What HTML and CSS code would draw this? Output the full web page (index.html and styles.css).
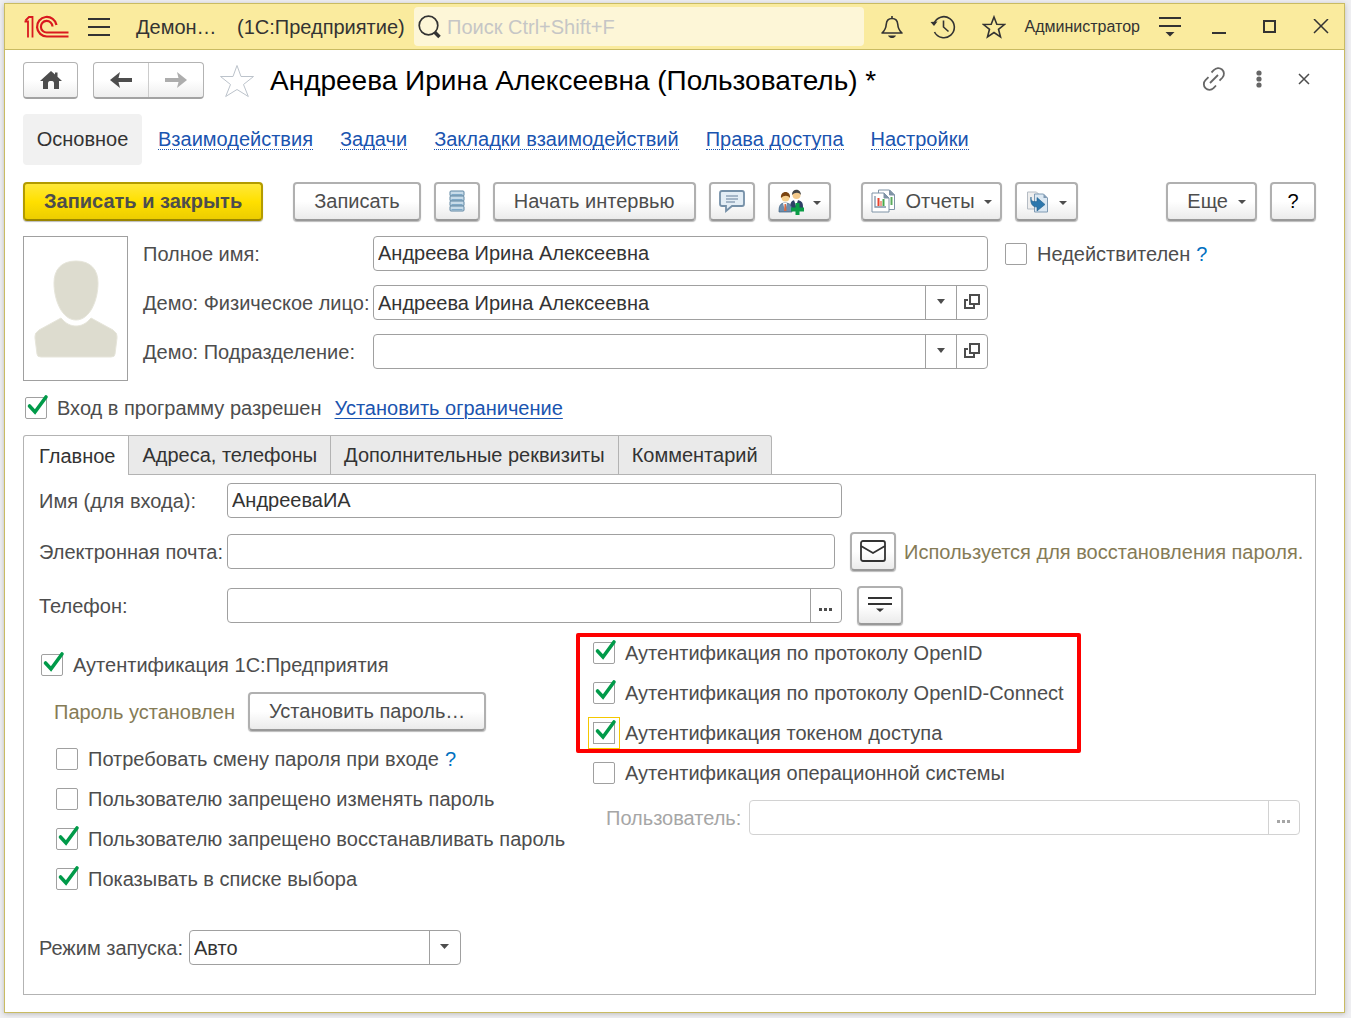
FILE: index.html
```html
<!DOCTYPE html>
<html lang="ru">
<head>
<meta charset="utf-8">
<title>Андреева Ирина Алексеевна (Пользователь)</title>
<link rel="stylesheet" href="styles.css">
</head>
<body>
<div class="window">
  <header class="titlebar">
    <svg class="logo" width="46" height="24" viewBox="0 0 46 24" fill="none" stroke="#d9191f">
      <path d="M0.500 6.500h3.500V22.500M1.500 5.500L5 2h3.500V22.500" stroke-width="1.800"/>
      <path d="M32.500 10A9.800 9.800 0 1 0 23 21.500H44.500M28.500 11.500A5.800 5.800 0 1 0 23 17.500H44.500" stroke-width="2.200"/>
    </svg>
    <button class="bar-button menu-button" aria-label="Меню"><svg width="22" height="18" viewBox="0 0 22 18" stroke="#333" stroke-width="2"><path d="M0 1h22M0 9h22M0 17h22"/></svg></button>
    <span class="app-name">Демон…</span>
    <span class="platform">(1С:Предприятие)</span>
    <label class="search">
      <svg width="24" height="24" viewBox="0 0 24 24" fill="none" stroke="#333"><circle cx="10.500" cy="10.500" r="9.300" stroke-width="1.700"/><path d="M16.500 17l5 5" stroke-width="3.500"/></svg>
      <input type="search" placeholder="Поиск Ctrl+Shift+F" aria-label="Поиск">
    </label>
    <div class="bar-tools">
      <button class="bar-button" aria-label="Уведомления"><svg width="24" height="24" viewBox="0 0 24 24" fill="none" stroke="#333" stroke-width="1.600"><path d="M2 18c3-2.500 4-5 4.300-9 .3-3.500 2.700-5.500 5.700-5.500s5.400 2 5.700 5.500c.3 4 1.300 6.500 4.300 9z" stroke-linejoin="round"/><path d="M12 1v2"/><path d="M8 20.500h8c-1 2-2.500 2.500-4 2.500s-3-.5-4-2.500z" fill="#333" stroke="none"/></svg></button>
      <button class="bar-button" aria-label="История"><svg width="26" height="24" viewBox="0 0 26 24" fill="none" stroke="#333" stroke-width="1.600"><path d="M4 8.500A10.500 10.500 0 1 1 4.500 17M13.500 5.500V12l5 4.500"/><path d="M0.500 7l7-.5L4 11z" fill="#333" stroke="none"/></svg></button>
      <button class="bar-button" aria-label="Избранное"><svg width="24" height="24" viewBox="0 0 24 24" fill="none" stroke="#333" stroke-width="1.600"><path d="M12 2l2.800 7.200 7.700.3-6 4.800 2 7.500L12 17.500l-6.500 4.300 2-7.500-6-4.800 7.700-.3z"/></svg></button>
      <span class="user-name">Администратор</span>
      <button class="bar-button" aria-label="Сервис"><svg width="22" height="20" viewBox="0 0 22 20"><path d="M0 1h22M0 9h22" stroke="#333" stroke-width="2"/><path d="M6.500 15h9L11 19.500z" fill="#333"/></svg></button>
    </div>
    <div class="window-controls">
      <button class="bar-button" aria-label="Свернуть"><svg width="16" height="16" viewBox="0 0 16 16"><path d="M1 14h14" stroke="#333" stroke-width="2"/></svg></button>
      <button class="bar-button" aria-label="Развернуть"><svg width="16" height="16" viewBox="0 0 16 16"><path d="M2 2h11v11H2z" fill="none" stroke="#333" stroke-width="2"/></svg></button>
      <button class="bar-button" aria-label="Закрыть"><svg width="16" height="16" viewBox="0 0 16 16"><path d="M1 0l14 14M15 0L1 14" stroke="#333" stroke-width="1.500"/></svg></button>
    </div>
  </header>

  <main class="page">
    <div class="heading">
      <button class="nav-button" aria-label="Домой"><svg width="22" height="18" viewBox="0 0 22 18" fill="#4d4d4d"><path d="M11 0l4 3.500V1.500h2.500v4.200L22 10h-3v8h-5v-5.500c0-2-1-2.500-3-2.500s-3 .5-3 2.500V18H3v-8H0z"/></svg></button>
      <div class="nav-pair">
        <button aria-label="Назад"><svg width="22" height="16" viewBox="0 0 22 16" fill="#4d4d4d"><path d="M0 8l10-8-1.500 6H22v4H8.500L10 16z"/></svg></button>
        <button aria-label="Вперед"><svg width="22" height="16" viewBox="0 0 22 16" fill="#adadad"><path d="M22 8L12 0l1.500 6H0v4h13.500L12 16z"/></svg></button>
      </div>
      <button class="favorite" aria-label="Добавить в избранное"><svg width="36" height="34" viewBox="0 0 36 34" fill="#fff" stroke="#bcc3cb"><path d="M18 1.500l4 11h12.500l-10 8 4.800 12L18 25.500l-11.300 7 4.800-12-10-8H14z"/></svg></button>
      <h1>Андреева Ирина Алексеевна (Пользователь) *</h1>
      <div class="heading-tools">
        <button class="plain" aria-label="Ссылка"><svg width="24" height="24" viewBox="0 0 24 24" fill="none" stroke="#666" stroke-width="1.800"><path d="M9.500 5.500l2.500-2.500a5.500 5.500 0 0 1 8.500 7.500l-3 3.200M6.500 10.200l-3 3a5.500 5.500 0 0 0 8 8l2.500-2.700M8 16l8-8"/></svg></button>
        <button class="plain" aria-label="Действия"><svg width="6" height="18" viewBox="0 0 6 18" fill="#666"><circle cx="3" cy="3" r="2.600"/><circle cx="3" cy="9" r="2.600"/><circle cx="3" cy="15" r="2.600"/></svg></button>
        <button class="plain" aria-label="Закрыть форму"><svg width="12" height="12" viewBox="0 0 12 12" stroke="#4d4d4d" stroke-width="1.500"><path d="M1 1l10 10M11 1L1 11"/></svg></button>
      </div>
    </div>

    <nav class="sections">
      <span class="current">Основное</span>
      <a href="#interactions">Взаимодействия</a>
      <a href="#tasks">Задачи</a>
      <a href="#bookmarks">Закладки взаимодействий</a>
      <a href="#rights">Права доступа</a>
      <a href="#settings">Настройки</a>
    </nav>

    <div class="commands">
      <div class="group"><button class="button primary">Записать и закрыть</button></div>
      <div class="group">
        <button class="button">Записать</button>
        <button class="button icon" aria-label="Список"><svg width="16" height="22" viewBox="0 0 16 22"><g fill="#c7dbe9" stroke="#5f86a3"><rect x="1" y="1" width="14" height="5" rx="1"/><rect x="1" y="6" width="14" height="5" rx="1"/><rect x="1" y="11" width="14" height="5" rx="1"/><rect x="1" y="16" width="14" height="5" rx="1"/></g><path d="M2.500 4.500h11M2.500 9.500h11M2.500 14.500h11M2.500 19.500h11" stroke="#7fa9c8"/></svg></button>
        <button class="button">Начать интервью</button>
        <button class="button icon" aria-label="Обсуждение"><svg width="26" height="24" viewBox="0 0 26 24"><path d="M3 2h20q2 0 2 2v11q0 2-2 2H13l-6 5v-5H3q-2 0-2-2V4q0-2 2-2z" fill="#e3edf5" stroke="#7590a8" stroke-width="1.800"/><path d="M7 7h12M7 10h12M7 13h9" stroke="#8fa3b8" stroke-width="1.300"/></svg></button>
        <button class="button icon-drop" aria-label="Участники">
          <svg width="26" height="26" viewBox="0 0 26 26"><path d="M12 20c0-6 1-9 6-9s7 2 7 7v2z" fill="#2e3f66"/><path d="M16 11l2 6 2-6z" fill="#fff"/><circle cx="18.500" cy="6" r="4" fill="#f3c98b"/><path d="M14 6c-.5-7 9-7 9 0-2-3-6-3-9 0z" fill="#444"/><path d="M1 23c0-6 1-9 6-9s7 2 7 9z" fill="#6f8fae" stroke="#3e5f80" stroke-width=".7"/><path d="M5 14l2 8 2-8z" fill="#fff"/><path d="M6.500 15h1.500l.5 7h-2.500z" fill="#d86b45"/><circle cx="7.500" cy="8.500" r="4" fill="#f6cf8d"/><path d="M3 9c-1-8 10-8 9 0-2-3-6-3-9 0z" fill="#7a4310"/><path d="M17.500 14h4v4.500H26v4h-4.500V26h-4v-3.500H13v-4h4.500z" fill="#0a9c46"/></svg>
          <svg class="caret" width="8" height="4" viewBox="0 0 8 4"><path d="M0 0h8L4 4z" fill="#4d4d4d"/></svg>
        </button>
      </div>
      <div class="group">
        <button class="button reports">
          <svg width="26" height="24" viewBox="0 0 26 24" fill="#fff" stroke="#7f93a6"><path d="M7.500 1h11l5 5v14.500h-16z"/><path d="M18.500 1v5h5z" fill="#7f93a6"/><path d="M20.500 8v8" stroke="#5cab5c" stroke-width="2"/><path d="M1 4h12l5 5v14H1z"/><path d="M13 4v5h5z" fill="#7f93a6"/><path d="M4 7v11h11" fill="none" stroke-width="1.300"/><path d="M7.500 9v8" stroke="#e8432e" stroke-width="2"/><path d="M10 12v5" stroke="#f0a090" stroke-width="2"/><path d="M12.500 10v7" stroke="#49a84a" stroke-width="2"/></svg>
          Отчеты
          <svg class="caret" width="8" height="4" viewBox="0 0 8 4"><path d="M0 0h8L4 4z" fill="#4d4d4d"/></svg>
        </button>
        <button class="button icon-drop" aria-label="Создать на основании">
          <svg width="24" height="24" viewBox="0 0 24 24"><path d="M1.500 2h9l3 3v14h-12z" fill="#eee" stroke="#b5bcc4"/><path d="M8.500 4h9l4 4v14h-13z" fill="#dbe8f3" stroke="#7f9ab3"/><path d="M17.500 4v4h4z" fill="#7f9ab3"/><path d="M5 7c0 4 1 5 6 4.500V7.500l8 7-8 6.500v-4C6 17 4 13 5 7z" fill="#2c77ad" stroke="#245f8c" stroke-width=".6"/></svg>
          <svg class="caret" width="8" height="4" viewBox="0 0 8 4"><path d="M0 0h8L4 4z" fill="#4d4d4d"/></svg>
        </button>
      </div>
      <div class="group end">
        <button class="button more">Еще <svg class="caret" width="8" height="4" viewBox="0 0 8 4"><path d="M0 0h8L4 4z" fill="#4d4d4d"/></svg></button>
        <button class="button icon help-button">?</button>
      </div>
    </div>

    <section class="person">
      <div class="photo">
        <svg width="84" height="98" viewBox="0 0 84 98" fill="#dddccf" stroke="#e6e5da"><path d="M42 1c15 0 22 9 22 22 0 17-8 37-22 37S20 40 20 23C20 10 27 1 42 1z"/><path d="M27 58c5 6 10 8 15 8s10-2 15-8l22 12q5 3 4 8l-2 16q0 3-4 3H7q-4 0-4-3L1 78q-1-5 4-8z"/></svg>
      </div>
      <div class="person-fields">
        <label for="full-name">Полное имя:</label>
        <input class="field" id="full-name" type="text" value="Андреева Ирина Алексеевна">
        <div class="check-row invalid">
          <label class="check"><input type="checkbox"><span>Недействителен</span></label>
          <a class="hint" href="#help-invalid">?</a>
        </div>

        <label for="individual">Демо: Физическое лицо:</label>
        <div class="combo">
          <input id="individual" type="text" value="Андреева Ирина Алексеевна">
          <button aria-label="Выбрать физическое лицо"><svg width="8" height="5" viewBox="0 0 8 5"><path d="M0 0h8L4 5z" fill="#4d4d4d"/></svg></button>
          <button aria-label="Открыть физическое лицо"><svg width="16" height="16" viewBox="0 0 16 16" fill="none" stroke="#4d4d4d" stroke-width="2"><path d="M6 1h9v9H6zM4 6H1v8h9v-3"/></svg></button>
        </div>

        <label class="row-start" for="department">Демо: Подразделение:</label>
        <div class="combo">
          <input id="department" type="text">
          <button aria-label="Выбрать подразделение"><svg width="8" height="5" viewBox="0 0 8 5"><path d="M0 0h8L4 5z" fill="#4d4d4d"/></svg></button>
          <button aria-label="Открыть подразделение"><svg width="16" height="16" viewBox="0 0 16 16" fill="none" stroke="#4d4d4d" stroke-width="2"><path d="M6 1h9v9H6zM4 6H1v8h9v-3"/></svg></button>
        </div>
      </div>
    </section>

    <div class="check-row access">
      <label class="check"><input type="checkbox" checked><span>Вход в программу разрешен</span></label>
      <a class="restrict" href="#restrict">Установить ограничение</a>
    </div>

    <div class="tabs" role="tablist">
      <button class="tab selected" role="tab" aria-selected="true">Главное</button>
      <button class="tab" role="tab" aria-selected="false">Адреса, телефоны</button>
      <button class="tab" role="tab" aria-selected="false">Дополнительные реквизиты</button>
      <button class="tab" role="tab" aria-selected="false">Комментарий</button>
    </div>

    <section class="panel">
      <div class="line login">
        <label for="login">Имя (для входа):</label>
        <input class="field" id="login" type="text" value="АндрееваИА">
      </div>
      <div class="line">
        <label for="email">Электронная почта:</label>
        <input class="field email" id="email" type="email">
        <button class="button icon" aria-label="Написать письмо"><svg width="26" height="22" viewBox="0 0 26 22" fill="none" stroke="#333" stroke-width="1.800"><rect x="1" y="1" width="24" height="20" rx="2"/><path d="M1 6l12 7 12-7"/></svg></button>
        <span class="note">Используется для восстановления пароля.</span>
      </div>
      <div class="line">
        <label for="phone">Телефон:</label>
        <div class="combo">
          <input id="phone" type="tel">
          <button class="dots" aria-label="Ввести телефон"><svg width="14" height="3" viewBox="0 0 14 3" fill="#4d4d4d"><path d="M0 0h3v3H0zM5 0h3v3H5zM10 0h3v3h-3z"/></svg></button>
        </div>
        <button class="button icon" aria-label="Действия с телефоном"><svg width="24" height="16" viewBox="0 0 24 16"><path d="M0 1h24M0 7h24" stroke="#333" stroke-width="2"/><path d="M8 11.500h8L12 15z" fill="#333"/></svg></button>
      </div>

      <div class="columns">
        <div class="auth">
          <label class="check"><input type="checkbox" checked><span>Аутентификация 1С:Предприятия</span></label>
          <div class="password">
            <span class="note">Пароль установлен</span>
            <button class="button">Установить пароль…</button>
          </div>
          <div class="options">
            <div class="check-row">
              <label class="check"><input type="checkbox"><span>Потребовать смену пароля при входе</span></label>
              <a class="hint" href="#help-password">?</a>
            </div>
            <label class="check"><input type="checkbox"><span>Пользователю запрещено изменять пароль</span></label>
            <label class="check"><input type="checkbox" checked><span>Пользователю запрещено восстанавливать пароль</span></label>
            <label class="check"><input type="checkbox" checked><span>Показывать в списке выбора</span></label>
          </div>
        </div>
        <div class="external">
          <div class="highlight">
            <label class="check"><input type="checkbox" checked><span>Аутентификация по протоколу OpenID</span></label>
            <label class="check"><input type="checkbox" checked><span>Аутентификация по протоколу OpenID-Connect</span></label>
            <label class="check focused"><input type="checkbox" checked><span>Аутентификация токеном доступа</span></label>
          </div>
          <label class="check os"><input type="checkbox"><span>Аутентификация операционной системы</span></label>
          <div class="os-user">
            <label for="os-user">Пользователь:</label>
            <div class="combo disabled">
              <input id="os-user" type="text" disabled>
              <button class="dots" disabled aria-label="Выбрать пользователя"><svg width="14" height="3" viewBox="0 0 14 3" fill="#a6a6a6"><path d="M0 0h3v3H0zM5 0h3v3H5zM10 0h3v3h-3z"/></svg></button>
            </div>
          </div>
        </div>
      </div>

      <div class="launch">
        <label for="launch">Режим запуска:</label>
        <select id="launch"><option>Авто</option></select>
      </div>
    </section>
  </main>
</div>
</body>
</html>
```
FILE: styles.css
```css
* { box-sizing: border-box; }

body {
  margin: 0;
  padding: 3px 6px 5px 4px;
  min-height: 100vh;
  display: flex;
  background: #efeff2;
  color: #4d4d4d;
  font: 20px/22px "Liberation Sans", Arial, sans-serif;
}

button, input, select { font: inherit; color: inherit; margin: 0; }
button { display: flex; align-items: center; justify-content: center; padding: 0; white-space: nowrap; }
label, .note { white-space: nowrap; }
svg { flex: none; display: block; }

.window {
  flex: 1;
  min-width: 0;
  display: flex;
  flex-direction: column;
  border: 1px solid #c9bb62;
  background: #fff;
  box-shadow: 0 1px 5px #bbb;
}

/* Title bar */
.titlebar {
  display: flex;
  align-items: center;
  height: 46px;
  padding: 0 15px 0 19px;
  border-bottom: 1px solid #c9bb62;
  background: #faeb9e;
  color: #333;
}
.bar-button, .plain, .favorite { border: 0; background: none; }
.menu-button { margin: 0 26px 0 18px; }
.app-name { width: 101px; }
.platform { width: 177px; white-space: nowrap; }
.search {
  flex: 1;
  display: flex;
  align-items: center;
  gap: 5px;
  height: 39px;
  padding-left: 4px;
  border-radius: 4px;
  background: #fdf6d7;
}
.search input { flex: 1; min-width: 0; border: 0; padding: 0; outline: 0; background: none; }
.search input::placeholder { color: #c6c6c6; opacity: 1; }
.bar-tools { display: flex; align-items: center; gap: 26px; padding-left: 16px; }
.user-name { margin: 0 -7px; font-size: 16px; }
.window-controls { display: flex; align-items: center; gap: 35px; padding-left: 30px; }

/* Form heading */
.page { flex: 1; min-width: 0; display: flex; flex-direction: column; padding: 12px 28px 17px 18px; }
.heading { display: flex; align-items: center; height: 37px; }
.nav-button, .nav-pair {
  height: 37px;
  border: 1px solid #b3b3b3;
  border-bottom: 2px solid #a3a3a3;
  border-radius: 4px;
  background: linear-gradient(#fff 50%, #eee);
}
.nav-button { width: 55px; margin-right: 15px; }
.nav-pair { display: flex; width: 111px; margin-right: 15px; }
.nav-pair button { flex: 1; border: 0; background: none; }
.nav-pair button + button { border-left: 1px solid #ccc; }
h1 { margin: 0 0 0 15px; color: #000; font-size: 28px; line-height: 32px; font-weight: normal; white-space: nowrap; }
.heading-tools { display: flex; align-items: center; gap: 21px; margin-left: auto; padding-bottom: 3px; }
.plain { width: 24px; height: 24px; }

.sections { display: flex; align-items: center; gap: 27px; height: 51px; margin-top: 15px; }
.sections a { color: #1a54b0; line-height: 20px; text-decoration: none; border-bottom: 1px dotted #1a54b0; white-space: nowrap; }
.current { width: 119px; margin-right: -11px; border-radius: 4px; background: #f1f1f1; color: #333; line-height: 51px; text-align: center; }

/* Buttons */
.button {
  height: 39px;
  padding: 0 19px 2px;
  border: 2px solid #b0b0b0;
  border-bottom-color: #999;
  border-radius: 4px;
  background: linear-gradient(#fff 50%, #ebebeb);
  box-shadow: 0 1px 1px #bbb;
}
.primary { border-color: #b39b00; border-bottom-color: #9a8500; background: linear-gradient(#ffe83a, #ffe000 50%, #eccd00); font-weight: bold; }
.icon { width: 46px; padding: 0 0 2px; }
.icon-drop { width: 63px; padding: 0; gap: 9px; }
.reports { padding: 0 8px 2px; gap: 9px; }
.more { padding: 0 9px 2px 19px; gap: 10px; }
.help-button { color: #000; }
.caret { margin-top: 3px; }
.commands { display: flex; gap: 30px; margin-top: 17px; }
.group { display: flex; gap: 13px; }
.end { margin-left: auto; }

/* Fields */
.field, .combo, select {
  width: 615px;
  height: 35px;
  border: 1px solid #a0a0a0;
  border-radius: 4px;
  background-color: #fff;
  color: #333;
}
.field { padding: 0 4px; }
.combo { display: flex; }
.combo input { flex: 1; min-width: 0; border: 0; padding: 0 4px; background: none; }
.combo button { width: 31px; padding-bottom: 2px; border: 0; border-left: 1px solid #a0a0a0; background: none; }
.combo .dots { padding: 7px 0 0; }
.disabled, .disabled button { border-color: #d2d2d2; }
.combo.disabled button { border-color: #d2d2d2; }
select {
  width: 272px;
  padding: 0 36px 0 4px;
  appearance: none;
  background-image: url("data:image/svg+xml,%3Csvg xmlns='http://www.w3.org/2000/svg' width='31' height='33'%3E%3Cpath d='M.5 0v33' stroke='%23a0a0a0'/%3E%3Cpath d='M11 13h9l-4.500 5z' fill='%234d4d4d'/%3E%3C/svg%3E");
  background-repeat: no-repeat;
  background-position: right center;
}

/* Checkboxes */
.check { display: flex; align-items: center; gap: 10px; height: 22px; }
.check input {
  position: relative;
  flex: none;
  width: 22px;
  height: 22px;
  appearance: none;
  border: 1px solid #a0a0a0;
  border-radius: 2px;
  background: #fff;
}
.check input:checked::after {
  content: "";
  position: absolute;
  left: -1px;
  top: -4px;
  width: 25px;
  height: 22px;
  background: url("data:image/svg+xml,%3Csvg xmlns='http://www.w3.org/2000/svg' width='25' height='22'%3E%3Cpath d='M4.500 12l5.500 6L21 3' fill='none' stroke='%23009a49' stroke-width='3.600' stroke-linecap='round'/%3E%3C/svg%3E");
}
.focused input { border-radius: 0; outline: 1px solid #f5c800; outline-offset: 4px; }
.check-row { display: flex; align-items: center; gap: 6px; }
.hint { color: #0070c0; text-decoration: none; }
.restrict { margin-left: 7px; color: #1a54b0; text-underline-offset: 3px; text-decoration-thickness: 1px; }

/* Person card */
.person { display: flex; gap: 15px; margin-top: 15px; }
.photo { display: grid; place-items: center; width: 105px; height: 145px; border: 1px solid #a0a0a0; }
.person-fields { display: grid; grid-template-columns: 230px 615px 1fr; grid-auto-rows: 35px; row-gap: 14px; align-items: center; }
.row-start { grid-column: 1; }
.invalid { padding-left: 17px; }
.access { margin: 16px 0 16px 2px; }

/* Tabs */
.tabs { display: flex; }
.tab { height: 39px; padding: 0 13px; border: 1px solid #b3b3b3; border-bottom: 0; border-left-width: 0; background: #eaeaea; color: #333; }
.tab:first-child { padding-left: 15px; border-left-width: 1px; border-top-left-radius: 3px; }
.tab:last-child { border-top-right-radius: 3px; }
.selected { position: relative; height: 40px; margin-bottom: -1px; background: #fff; }
.panel { flex: 1; padding: 8px 15px 29px; border: 1px solid #b3b3b3; }
.line { display: grid; grid-template-columns: 188px auto auto minmax(0, 1fr); justify-content: start; align-items: center; min-height: 39px; margin-bottom: 15px; }
.login { min-height: 35px; margin-bottom: 14px; }
.line .icon { margin-left: 15px; }
.email { width: 608px; }
.note { color: #857b56; }
.line .note { margin-left: 8px; }

.columns { display: grid; grid-template-columns: 537px minmax(0, 1fr); margin-top: -7px; }
.auth { padding: 21px 0 0 2px; }
.password { display: flex; align-items: center; gap: 13px; margin: 16px 0 17px 13px; }
.options { display: flex; flex-direction: column; gap: 18px; margin-left: 15px; }
.highlight { display: flex; flex-direction: column; gap: 18px; width: 505px; padding: 5px 13px; border: 4px solid #fe0000; border-radius: 2px; }
.os { margin: 9px 0 16px 17px; }
.os-user { display: flex; align-items: center; gap: 8px; margin-left: 30px; color: #a6a6a6; }
.os-user .combo { flex: 1; width: auto; }
.launch { display: flex; align-items: center; gap: 6px; margin-top: 40px; }
```
